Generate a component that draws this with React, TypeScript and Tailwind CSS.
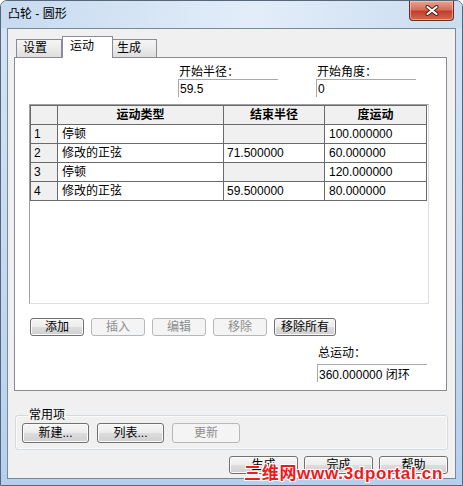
import React from 'react';

type BtnProps = {
  label: string;
  className: string;
  disabled?: boolean;
};

// Win7 风格按钮
const Btn: React.FC<BtnProps> = ({ label, className, disabled }) => (
  <button
    disabled={disabled}
    className={`${className} flex items-center justify-center rounded-[3px] border text-[12px] leading-none ${
      disabled
        ? 'border-[#b5b9bc] bg-[#f4f4f4] text-[#8d8d8d]'
        : 'border-[#707070] bg-[linear-gradient(180deg,#f6f6f6_0%,#ececec_48%,#dcdcdc_52%,#d0d0d0_100%)] text-black shadow-[inset_0_0_0_1px_#fbfbfb]'
    }`}
  >
    {label}
  </button>
);

// 只有上边和左边描线的输入框
const Field: React.FC<{ label: string; value: string; className: string }> = ({ label, value, className }) => (
  <div className={className}>
    <div className="h-[13px] pl-[1px] text-[12px] leading-[13px]">{label}</div>
    <div className="h-[18px] border-t border-l border-[#a6a9ae] pl-[1px] text-[12px] leading-[18px]">{value}</div>
  </div>
);

type Row = { type: string; end: string; deg: string };

const rows: Row[] = [
  { type: '停顿', end: '', deg: '100.000000' },
  { type: '修改的正弦', end: '71.500000', deg: '60.000000' },
  { type: '停顿', end: '', deg: '120.000000' },
  { type: '修改的正弦', end: '59.500000', deg: '80.000000' },
];

const cell = 'h-[19px] border-r border-b border-[#6a6a6a] text-[12px] leading-[18px] truncate';

const MotionTable: React.FC = () => (
  <div className="ml-[14px] mt-[7px] h-[200px] w-[400px] border border-t-[#a0a0a0] border-l-[#a0a0a0] border-r-[#dedede] border-b-[#dedede] bg-white">
    <div className="w-fit border-t border-l border-[#6a6a6a]">
      <div className="flex bg-[#f0f0f0] font-bold">
        <div className={`${cell} w-[27px]`} />
        <div className={`${cell} w-[166px] text-center`}>运动类型</div>
        <div className={`${cell} w-[101px] text-center`}>结束半径</div>
        <div className={`${cell} w-[102px] text-center`}>度运动</div>
      </div>
      {rows.map((r, i) => (
        <div key={i} className="flex">
          <div className={`${cell} w-[27px] bg-[#f0f0f0] pl-[3px]`}>{i + 1}</div>
          <div className={`${cell} w-[166px] pl-[4px]`}>{r.type}</div>
          <div className={`${cell} w-[101px] pl-[3px] text-[11px] ${r.end ? 'bg-white' : 'bg-[#f0f0f0]'}`}>{r.end}</div>
          <div className={`${cell} w-[102px] pl-[4px] text-[11px]`}>{r.deg}</div>
        </div>
      ))}
    </div>
  </div>
);

export default function App() {
  return (
    <div
      className="relative flex h-[486px] w-[463px] flex-col overflow-hidden rounded-t-[7px] border border-[#56677a] bg-[linear-gradient(180deg,#d4e4f5_0%,#c9dcf1_40%,#b5d0ef_100%)] text-black"
      style={{ fontFamily: '"Liberation Sans", "Noto Sans CJK SC", sans-serif' }}
    >
      {/* 标题栏 */}
      <div className="flex h-[27px] shrink-0 items-start bg-[linear-gradient(100deg,#c6daf0_0%,#d8e6f5_35%,#e2edf8_55%,#cadcf0_100%)]">
        <div className="pl-[7px] pt-[6px] text-[12px] leading-[14px]">凸轮 - 圆形</div>
        <div className="ml-auto mr-[8px] flex h-[20px] w-[45px] items-center justify-center rounded-b-[4px] border border-t-0 border-[#6e2b22] bg-[linear-gradient(180deg,#e9a493_0%,#d66e5a_45%,#c2402b_55%,#d36852_100%)] shadow-[inset_0_0_0_1px_rgba(255,220,210,0.5)]">
          <svg width="14" height="11" viewBox="0 0 14 11">
            <path d="M2.5 2 L11.5 9 M11.5 2 L2.5 9" stroke="#4a1c15" strokeWidth="4" strokeLinecap="round" />
            <path d="M2.5 2 L11.5 9 M11.5 2 L2.5 9" stroke="#ffffff" strokeWidth="2.2" strokeLinecap="round" />
          </svg>
        </div>
      </div>

      {/* 客户区 */}
      <div className="mx-[6px] mb-[6px] flex flex-1 flex-col border border-[#7d8896] bg-[#f0f0f0]">
        <div className="pl-[6px] pr-[8px] pt-[7px]">
          {/* 选项卡 */}
          <div className="relative z-10 flex h-[21px] items-end pl-[2px]">
            <div className="h-[18px] w-[46px] border border-b-0 border-[#898c95] bg-[linear-gradient(180deg,#f5f5f5_0%,#ebebeb_50%,#dedede_100%)] pl-[6px] text-[12px] leading-[17px]">
              设置
            </div>
            <div className="-mb-px h-[22px] w-[51px] border border-b-0 border-[#898c95] bg-white pl-[7px] text-[12px] leading-[18px]">
              运动
            </div>
            <div className="h-[18px] w-[44px] border border-b-0 border-l-0 border-[#898c95] bg-[linear-gradient(180deg,#f5f5f5_0%,#ebebeb_50%,#dedede_100%)] pl-[4px] text-[12px] leading-[17px]">
              生成
            </div>
          </div>

          {/* 运动页 */}
          <div className="h-[334px] border border-[#898c95] bg-white">
            <div className="flex pt-[8px]">
              <Field className="ml-[163px] w-[100px]" label="开始半径：" value="59.5" />
              <Field className="ml-[38px] w-[100px]" label="开始角度：" value="0" />
            </div>

            <MotionTable />

            <div className="ml-[15px] mt-[14px] flex gap-[7px]">
              <Btn className="h-[18px] w-[54px]" label="添加" />
              <Btn className="h-[18px] w-[54px]" label="插入" disabled />
              <Btn className="h-[18px] w-[54px]" label="编辑" disabled />
              <Btn className="h-[18px] w-[54px]" label="移除" disabled />
              <Btn className="h-[18px] w-[62px]" label="移除所有" />
            </div>

            <div className="ml-[302px] mt-[11px] w-[110px]">
              <div className="h-[13px] pl-[1px] text-[12px] leading-[13px]">总运动：</div>
              <div className="mt-[4px] h-[18px] border-t border-l border-[#a6a9ae] pl-[1px] pt-[1px] text-[12px] leading-[18px]">
                360.000000 闭环
              </div>
            </div>
          </div>
        </div>

        {/* 常用项 */}
        <fieldset className="mx-[7px] mt-[18px] rounded-[3px] border border-[#d3dbe0] px-[6px] pb-[6px] pt-[2px] shadow-[inset_0_0_0_1px_#fafafa]">
          <legend className="ml-[6px] px-[1px] text-[12px] leading-[12px]">常用项</legend>
          <div className="flex gap-[8px]">
            <Btn className="h-[20px] w-[67px]" label="新建..." />
            <Btn className="h-[20px] w-[67px]" label="列表..." />
            <Btn className="h-[20px] w-[68px]" label="更新" disabled />
          </div>
        </fieldset>

        <div className="mt-[6px] flex justify-end gap-[6px] pr-[7px]">
          <Btn className="h-[18px] w-[69px]" label="生成" />
          <Btn className="h-[18px] w-[69px]" label="完成" />
          <Btn className="h-[18px] w-[69px]" label="帮助" />
        </div>
      </div>

      {/* 水印 */}
      <div className="pointer-events-none absolute left-[243px] top-[464px] whitespace-nowrap text-[17px] font-bold leading-[18px] tracking-[0.7px] text-[#f01a1a] [text-shadow:1px_0_#fff,-1px_0_#fff,0_1px_#fff,0_-1px_#fff,1px_1px_#fff,-1px_-1px_#fff,1px_-1px_#fff,-1px_1px_#fff]">
        三维网www.3dportal.cn
      </div>
    </div>
  );
}
